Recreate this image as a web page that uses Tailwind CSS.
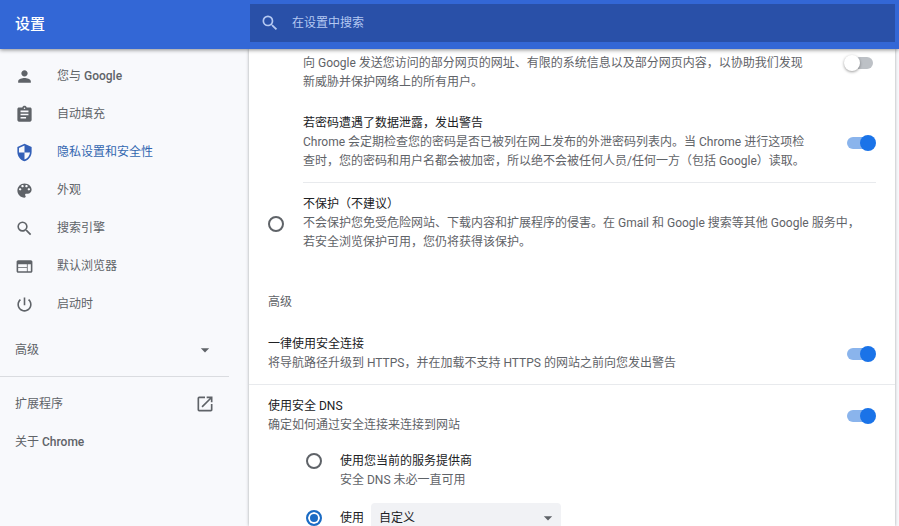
<!DOCTYPE html>
<html lang="zh-CN">
<head>
  <meta charset="UTF-8">
  <meta name="viewport" content="width=device-width, initial-scale=1.0">
  <title>设置</title>
  <script src="https://cdn.jsdelivr.net/npm/@tailwindcss/browser@4"></script>
</head>
<body class="h-screen flex flex-col overflow-hidden bg-[#f8f9fc] text-[12px] leading-[19px] text-[#5f6368] font-[Roboto,'Noto_Sans_CJK_SC',sans-serif]">

  <!-- Toolbar -->
  <header class="relative z-10 h-[49px] shrink-0 flex bg-[#3367d6] shadow-[0_1px_4px_rgba(0,0,0,0.45)]">
    <h1 class="w-[250px] shrink-0 pl-[15px] text-[15px] leading-[49px] font-medium text-white">设置</h1>
    <label class="grow mt-1 mr-1 h-[38px] flex items-center gap-3 pl-[10px] bg-[#2950a8] text-[#b4c8f2]">
      <svg class="size-5 shrink-0" viewBox="0 0 24 24" fill="currentColor"><path d="M15.5 14h-.79l-.28-.27A6.47 6.47 0 0 0 16 9.5 6.5 6.5 0 1 0 9.5 16c1.61 0 3.09-.59 4.23-1.57l.27.28v.79l5 4.99L20.49 19l-4.99-5zm-6 0C7.01 14 5 11.99 5 9.5S7.01 5 9.5 5 14 7.01 14 9.5 11.99 14 9.5 14z"/></svg>
      <input type="search" aria-label="在设置中搜索" placeholder="在设置中搜索" class="grow bg-transparent outline-none text-white placeholder:text-[#b4c8f2]">
    </label>
  </header>

  <div class="grow min-h-0 flex">
    <!-- Side menu -->
    <nav class="w-[249px] shrink-0 pt-2">
      <a href="#people" class="h-[38px] flex items-center gap-[23px] pl-[15px]">
        <svg class="size-[19px]" viewBox="0 0 24 24" fill="currentColor"><path d="M12 12c2.21 0 4-1.79 4-4s-1.79-4-4-4-4 1.79-4 4 1.79 4 4 4zm0 2c-2.67 0-8 1.34-8 4v2h16v-2c0-2.66-5.33-4-8-4z"/></svg>
        <span>您与 <span class="font-medium">Google</span></span>
      </a>
      <a href="#autofill" class="h-[38px] flex items-center gap-[23px] pl-[15px]">
        <svg class="size-[19px]" viewBox="0 0 24 24" fill="currentColor"><path d="M19 3h-4.18C14.4 1.84 13.3 1 12 1c-1.3 0-2.4.84-2.82 2H5c-1.1 0-2 .9-2 2v14c0 1.1.9 2 2 2h14c1.1 0 2-.9 2-2V5c0-1.1-.9-2-2-2zm-7 0c.55 0 1 .45 1 1s-.45 1-1 1-1-.45-1-1 .45-1 1-1zm2 14H7v-2h7v2zm3-4H7v-2h10v2zm0-4H7V7h10v2z"/></svg>
        <span>自动填充</span>
      </a>
      <a href="#privacy" aria-current="page" class="h-[38px] flex items-center gap-[23px] pl-[15px] text-[#3367b0]">
        <svg class="size-[19px] text-[#3360b8]" viewBox="0 0 24 24" fill="currentColor"><path d="M12 1L3 5v6c0 5.55 3.84 10.74 9 12 5.16-1.26 9-6.45 9-12V5l-9-4zm0 10.99h7c-.53 4.12-3.28 7.79-7 8.94V12H5V6.3l7-3.11v8.8z"/></svg>
        <span>隐私设置和安全性</span>
      </a>
      <a href="#appearance" class="h-[38px] flex items-center gap-[23px] pl-[15px]">
        <svg class="size-[19px]" viewBox="0 0 24 24" fill="currentColor"><path d="M12 3c-4.97 0-9 4.03-9 9s4.03 9 9 9c.83 0 1.5-.67 1.5-1.5 0-.39-.15-.74-.39-1.01-.23-.26-.38-.61-.38-.99 0-.83.67-1.5 1.5-1.5H16c2.76 0 5-2.24 5-5 0-4.42-4.03-8-9-8zm-5.5 9c-.83 0-1.5-.67-1.5-1.5S5.67 9 6.5 9 8 9.67 8 10.5 7.33 12 6.5 12zm3-4C8.67 8 8 7.33 8 6.5S8.67 5 9.5 5s1.5.67 1.5 1.5S10.33 8 9.5 8zm5 0c-.83 0-1.5-.67-1.5-1.5S13.67 5 14.5 5s1.5.67 1.5 1.5S15.33 8 14.5 8zm3 4c-.83 0-1.5-.67-1.5-1.5S16.67 9 17.5 9s1.5.67 1.5 1.5-.67 1.5-1.5 1.5z"/></svg>
        <span>外观</span>
      </a>
      <a href="#search" class="h-[38px] flex items-center gap-[23px] pl-[15px]">
        <svg class="size-[19px]" viewBox="0 0 24 24" fill="currentColor"><path d="M15.5 14h-.79l-.28-.27A6.47 6.47 0 0 0 16 9.5 6.5 6.5 0 1 0 9.5 16c1.61 0 3.09-.59 4.23-1.57l.27.28v.79l5 4.99L20.49 19l-4.99-5zm-6 0C7.01 14 5 11.99 5 9.5S7.01 5 9.5 5 14 7.01 14 9.5 11.99 14 9.5 14z"/></svg>
        <span>搜索引擎</span>
      </a>
      <a href="#defaultBrowser" class="h-[38px] flex items-center gap-[23px] pl-[15px]">
        <svg class="size-[19px]" viewBox="0 0 24 24" fill="currentColor"><path d="M20 4H4c-1.1 0-1.99.9-1.99 2L2 18c0 1.1.9 2 2 2h16c1.1 0 2-.9 2-2V6c0-1.1-.9-2-2-2zm-5 14H4v-4h11v4zm0-5H4V9h11v4zm5 5h-4V9h4v9z"/></svg>
        <span>默认浏览器</span>
      </a>
      <a href="#onStartup" class="h-[38px] flex items-center gap-[23px] pl-[15px]">
        <svg class="size-[19px]" viewBox="0 0 24 24" fill="currentColor"><path d="M13 3h-2v10h2V3zm4.83 2.17l-1.42 1.42C17.99 7.86 19 9.81 19 12c0 3.87-3.13 7-7 7s-7-3.13-7-7c0-2.19 1.01-4.14 2.58-5.42L6.17 5.17C4.23 6.82 3 9.26 3 12c0 4.97 4.03 9 9 9s9-4.03 9-9c0-2.74-1.23-5.18-3.17-6.83z"/></svg>
        <span>启动时</span>
      </a>
      <button type="button" class="mt-2 w-full h-[38px] flex items-center justify-between pl-[15px] pr-[34px]">
        <span>高级</span>
        <svg class="size-5" viewBox="0 0 24 24" fill="currentColor"><path d="M7 10l5 5 5-5z"/></svg>
      </button>
      <hr class="mt-[7px] mr-5 mb-2 border-[#dadce0]">
      <a href="#extensions" class="h-[38px] flex items-center justify-between pl-[15px] pr-[34px]">
        <span>扩展程序</span>
        <svg class="size-5" viewBox="0 0 24 24" fill="currentColor"><path d="M19 19H5V5h7V3H5a2 2 0 0 0-2 2v14a2 2 0 0 0 2 2h14c1.1 0 2-.9 2-2v-7h-2v7zM14 3v2h3.59l-9.83 9.83 1.41 1.41L19 6.41V10h2V3h-7z"/></svg>
      </a>
      <a href="#help" class="h-[38px] flex items-center pl-[15px]">
        <span>关于 <span class="font-medium">Chrome</span></span>
      </a>
    </nav>

    <!-- Security settings -->
    <main class="grow mr-1 pt-[5px] bg-white shadow-[0_0_3px_rgba(60,64,67,0.45)]">
      <div class="pl-[54px] pr-[19px]">
        <div class="flex justify-between items-start">
          <label for="report">向 Google 发送您访问的部分网页的网址、有限的系统信息以及部分网页内容，以协助我们发现<br>新威胁并保护网络上的所有用户。</label>
          <input id="report" type="checkbox" role="switch" class="relative mt-px w-8 h-4 shrink-0 appearance-none before:absolute before:left-[3px] before:top-[2px] before:w-[26px] before:h-3 before:rounded-full before:bg-[#bdc1c6] after:absolute after:left-0 after:top-0 after:size-4 after:rounded-full after:bg-white after:shadow-[0_1px_3px_rgba(0,0,0,0.4)] checked:before:bg-[#8ab4ec] checked:after:left-4 checked:after:bg-[#1a73e8] checked:after:shadow-none">
        </div>
        <div class="mt-[22px] pb-[11px] flex justify-between items-center border-b border-[#e8eaed]">
          <label for="leak"><span class="text-[#202124]">若密码遭遇了数据泄露，发出警告</span><br>Chrome 会定期检查您的密码是否已被列在网上发布的外泄密码列表内。当 Chrome 进行这项检<br>查时，您的密码和用户名都会被加密，所以绝不会被任何人员/任何一方（包括 Google）读取。</label>
          <input id="leak" type="checkbox" role="switch" checked class="relative w-8 h-4 shrink-0 appearance-none before:absolute before:left-[3px] before:top-[2px] before:w-[26px] before:h-3 before:rounded-full before:bg-[#bdc1c6] after:absolute after:left-0 after:top-0 after:size-4 after:rounded-full after:bg-white after:shadow-[0_1px_3px_rgba(0,0,0,0.4)] checked:before:bg-[#8ab4ec] checked:after:left-4 checked:after:bg-[#1a73e8] checked:after:shadow-none">
        </div>
      </div>

      <div class="mt-3 flex items-center gap-[19px] pl-[19px]">
        <input id="no-protection" type="radio" name="protection" class="size-4 shrink-0 appearance-none rounded-full border-2 border-[#5f6368] checked:border-[#1a6bc4] checked:bg-[#1a6bc4] checked:shadow-[inset_0_0_0_2px_#fff]">
        <label for="no-protection"><span class="text-[#202124]">不保护（不建议）</span><br>不会保护您免受危险网站、下载内容和扩展程序的侵害。在 Gmail 和 Google 搜索等其他 Google 服务中，<br>若安全浏览保护可用，您仍将获得该保护。</label>
      </div>

      <h2 class="mt-[41px] pl-[19px]">高级</h2>

      <div class="mt-[23px] pb-[11px] flex justify-between items-center px-[19px] border-b border-[#e8eaed]">
        <label for="https"><span class="text-[#202124]">一律使用安全连接</span><br>将导航路径升级到 HTTPS，并在加载不支持 HTTPS 的网站之前向您发出警告</label>
        <input id="https" type="checkbox" role="switch" checked class="relative w-8 h-4 shrink-0 appearance-none before:absolute before:left-[3px] before:top-[2px] before:w-[26px] before:h-3 before:rounded-full before:bg-[#bdc1c6] after:absolute after:left-0 after:top-0 after:size-4 after:rounded-full after:bg-white after:shadow-[0_1px_3px_rgba(0,0,0,0.4)] checked:before:bg-[#8ab4ec] checked:after:left-4 checked:after:bg-[#1a73e8] checked:after:shadow-none">
      </div>

      <div class="mt-3 flex justify-between items-center px-[19px]">
        <label for="dns"><span class="text-[#202124]">使用安全 DNS</span><br>确定如何通过安全连接来连接到网站</label>
        <input id="dns" type="checkbox" role="switch" checked class="relative w-8 h-4 shrink-0 appearance-none before:absolute before:left-[3px] before:top-[2px] before:w-[26px] before:h-3 before:rounded-full before:bg-[#bdc1c6] after:absolute after:left-0 after:top-0 after:size-4 after:rounded-full after:bg-white after:shadow-[0_1px_3px_rgba(0,0,0,0.4)] checked:before:bg-[#8ab4ec] checked:after:left-4 checked:after:bg-[#1a73e8] checked:after:shadow-none">
      </div>
      <div class="mt-[17px] flex items-start gap-[18px] pl-[57px]">
        <input id="dns-current" type="radio" name="dns-mode" class="mt-px size-4 shrink-0 appearance-none rounded-full border-2 border-[#5f6368] checked:border-[#1a6bc4] checked:bg-[#1a6bc4] checked:shadow-[inset_0_0_0_2px_#fff]">
        <label for="dns-current"><span class="text-[#202124]">使用您当前的服务提供商</span><br>安全 DNS 未必一直可用</label>
      </div>
      <div class="mt-[13px] flex items-center pl-[57px] text-[#202124]">
        <input id="dns-custom" type="radio" name="dns-mode" checked class="mr-[18px] size-4 shrink-0 appearance-none rounded-full border-2 border-[#5f6368] checked:border-[#1a6bc4] checked:bg-[#1a6bc4] checked:shadow-[inset_0_0_0_2px_#fff]">
        <label for="dns-custom" class="mr-[7px]">使用</label>
        <div class="relative">
          <select aria-label="DNS 提供商" class="w-[190px] h-[30px] appearance-none rounded bg-[#f1f2f5] pl-2">
            <option>自定义</option>
          </select>
          <svg class="absolute right-[3px] top-[5px] size-5 pointer-events-none text-[#5f6368]" viewBox="0 0 24 24" fill="currentColor"><path d="M7 10l5 5 5-5z"/></svg>
        </div>
      </div>
    </main>
  </div>

</body>
</html>
